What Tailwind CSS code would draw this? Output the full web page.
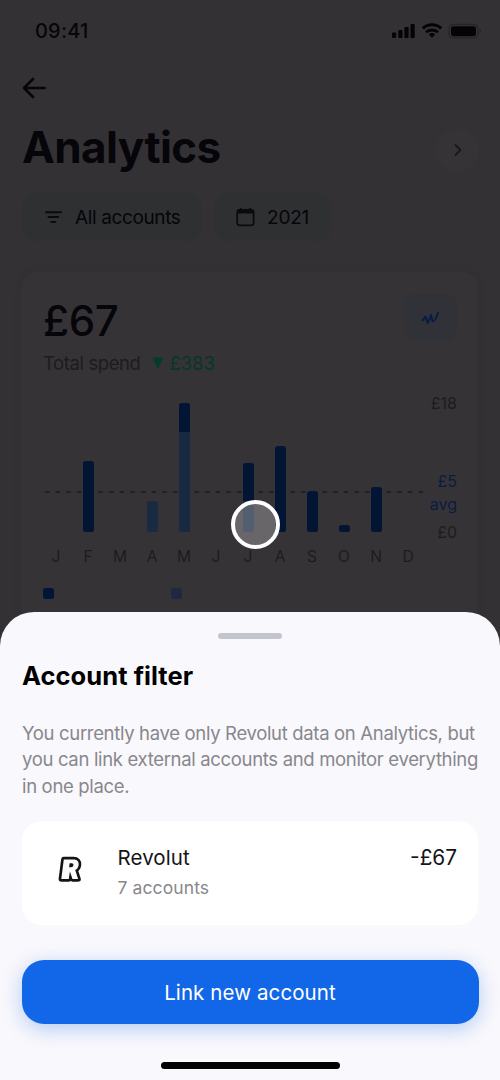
<!DOCTYPE html>
<html lang="en">
<head>
<meta charset="utf-8">
<title>Analytics</title>
<script src="https://cdn.jsdelivr.net/npm/@tailwindcss/browser@4"></script>
</head>
<body class="relative flex h-[1080px] w-[500px] flex-col overflow-hidden bg-[#343135] font-[Inter,sans-serif] text-[#060509]">

<!-- Status bar -->
<header class="flex h-[62px] shrink-0 items-center justify-between pr-[19px] pl-[35px]">
  <span class="text-[20px] leading-[24px] font-medium tracking-[0.2px]">09:41</span>
  <svg width="90" height="20" viewBox="0 0 90 20" fill="#040306">
    <rect x="1" y="11.5" width="4.2" height="5.5" rx="1"/>
    <rect x="7.3" y="9" width="4.2" height="8" rx="1"/>
    <rect x="13.4" y="6" width="4.2" height="11" rx="1"/>
    <rect x="19.5" y="3" width="4.2" height="14" rx="1"/>
    <path d="M31.8 7.4a13.5 13.5 0 0 1 18.4 0" fill="none" stroke="#040306" stroke-width="3"/>
    <path d="M35 11.3a9 9 0 0 1 12 0" fill="none" stroke="#040306" stroke-width="2.8"/>
    <path d="M37.8 13.4a4.8 4.8 0 0 1 6.4 0L41 16.8z"/>
    <rect x="58" y="3.4" width="29" height="13.6" rx="4" fill="none" stroke="#242226" stroke-width="1"/>
    <rect x="60" y="5.2" width="25" height="10" rx="2.4"/>
    <path d="M88.6 8v4.6c1.6-.6 1.6-4 0-4.6z" fill="#242226"/>
  </svg>
</header>

<div class="flex h-[52px] shrink-0 items-center px-[22px]">
  <svg width="25" height="22" viewBox="0 0 25 22" fill="none" stroke="#060509" stroke-width="2.7" stroke-linecap="round" stroke-linejoin="round"><path d="M22.6 11H2M11 2 2 11l9 9"/></svg>
</div>

<div class="flex h-[66px] shrink-0 items-center justify-between pr-[21px] pl-[22px]">
  <h1 class="text-[44px] leading-[52px] font-bold tracking-[-0.6px]">Analytics</h1>
  <div class="mt-[6px] flex size-[43px] items-center justify-center rounded-full bg-[#363337]">
    <svg width="10" height="14" viewBox="0 0 10 14" fill="none" stroke="#1a181c" stroke-width="1.8" stroke-linecap="round" stroke-linejoin="round"><path d="m2.500 2 5 5-5 5"/></svg>
  </div>
</div>

<div class="mt-[13px] flex h-[48px] shrink-0 gap-[12px] pl-[22px]">
  <div class="flex w-[180px] items-center rounded-[14px] bg-[#2f3032] pl-[23px]">
    <svg class="mr-[13px]" width="17" height="14" viewBox="0 0 17 14" fill="none" stroke="#0b0a0d" stroke-width="1.9" stroke-linecap="round"><path d="M1 2.200h15M3.500 7h9.700M6.300 12h4"/></svg>
    <span class="mt-px text-[19px] leading-[24px] tracking-[-0.37px] whitespace-nowrap">All accounts</span>
  </div>
  <div class="flex w-[118px] items-center rounded-[14px] bg-[#2f3032] pl-[22px]">
    <svg class="mr-[12px]" width="19" height="20" viewBox="0 0 19 20" fill="none" stroke="#0b0a0d"><rect x="1.2" y="2.8" width="16.4" height="15.6" rx="2.6" stroke-width="1.7"/><path d="M1.4 4.6h16" stroke-width="3.8"/><path d="M4.7 1v3M14.1 1v3" stroke-width="1.8"/></svg>
    <span class="mt-px text-[19px] leading-[24px] tracking-[-0.2px]">2021</span>
  </div>
</div>

<!-- Spend card -->
<section class="mx-[22px] mt-[31px] flex h-[370px] shrink-0 flex-col rounded-[16px] bg-[#363337] pr-[21px] pl-[22px] pt-[22px] shadow-[0_0_14px_rgba(0,0,0,0.03)]">
  <div class="flex h-[56px] items-start justify-between">
    <div class="mt-[2px] -ml-px text-[42px] leading-[50px] font-medium tracking-[-0.4px]">£67</div>
    <div class="flex h-[47px] w-[53px] items-center justify-center rounded-[12px] bg-[#313237]">
      <svg width="19" height="14" viewBox="0 0 19 14" fill="none" stroke="#071b45" stroke-width="2" stroke-linecap="round" stroke-linejoin="round"><path d="M1.500 9.300 4.500 5.500l2.300 6.500 3.200-8 1.700 6.500c1.900.5 3.700-4 5.300-8.500"/></svg>
    </div>
  </div>
  <div class="-ml-px flex h-[26px] items-center text-[18.5px] leading-[24px]">
    <span class="tracking-[-0.4px] text-[#1d1b1f]">Total spend</span>
    <svg class="mr-[6px] ml-[11px]" width="12" height="12" viewBox="0 0 12 12"><path d="M.3.5h11.400L6 11.800z" fill="#033c27"/></svg>
    <span class="tracking-[-0.1px] text-[#063725]">£383</span>
  </div>
  <div class="mt-[21px] flex h-[150px] justify-between">
    <div class="relative w-[380px]">
      <svg class="absolute top-[94px] left-0" width="380" height="2"><path d="M1 1h379" stroke="#1d1b1f" stroke-width="1.4" stroke-dasharray="4.6 6.07"/></svg>
      <div class="relative grid h-[135px] w-[384px] -translate-x-[4px] grid-cols-12 items-end justify-items-center">
        <i></i>
        <i class="h-[71px] w-[11px] rounded-t-[3px] rounded-b-[2px] bg-[#031535]"></i>
        <i></i>
        <i class="h-[31px] w-[11px] rounded-t-[3px] rounded-b-[2px] bg-[#1a2a42]"></i>
        <i class="flex h-[129px] w-[11px] flex-col overflow-hidden rounded-t-[3px] rounded-b-[2px] bg-[#192942]"><b class="h-[29px] bg-[#031535]"></b></i>
        <i></i>
        <i class="flex h-[69px] w-[11px] flex-col overflow-hidden rounded-t-[3px] rounded-b-[2px] bg-[#1a2a42]"><b class="h-[38px] bg-[#031535]"></b></i>
        <i class="h-[86px] w-[11px] rounded-t-[3px] rounded-b-[2px] bg-[#031535]"></i>
        <i class="h-[41px] w-[11px] rounded-t-[3px] rounded-b-[2px] bg-[#031535]"></i>
        <i class="h-[7px] w-[11px] rounded-t-[3px] rounded-b-[2px] bg-[#031535]"></i>
        <i class="h-[45px] w-[11px] rounded-t-[3px] rounded-b-[2px] bg-[#031535]"></i>
        <i></i>
      </div>
    </div>
    <div class="flex flex-col items-end text-[16px] leading-[23px] text-[#1d1b1f]">
      <span class="-mt-[5px]">£18</span>
      <span class="mt-[55px] text-[#0a1c42]">£5</span>
      <span class="text-[#0a1c42]">avg</span>
      <span class="mt-[5px]">£0</span>
    </div>
  </div>
  <div class="mt-[-2px] grid w-[384px] -translate-x-[4px] shrink-0 grid-cols-12 text-center text-[15.5px] leading-[24px] text-[#1d1b1f]">
    <span>J</span><span>F</span><span>M</span><span>A</span><span>M</span><span>J</span><span>J</span><span>A</span><span>S</span><span>O</span><span>N</span><span>D</span>
  </div>
  <div class="mt-[19px] -ml-px flex gap-[117px]">
    <i class="size-[11px] rounded-[2.5px] bg-[#031535]"></i>
    <i class="size-[11px] rounded-[2.5px] bg-[#1f2840]"></i>
  </div>
</section>

<!-- Touch indicator -->
<div class="absolute top-[500px] left-[231px] z-10 size-[49px] rounded-full border-[4.5px] border-white bg-white/25"></div>

<!-- Account filter sheet -->
<section class="absolute inset-x-0 bottom-0 z-20 flex h-[468px] flex-col rounded-t-[34px] bg-[#f9f8fc] px-[22px]">
  <div class="mt-[21px] h-[6px] w-[64px] shrink-0 self-center rounded-full bg-[#c2c5cd]"></div>
  <h2 class="mt-[21px] text-[25.5px] leading-[32px] font-bold tracking-[0.05px] text-black">Account filter</h2>
  <p class="mt-[28px] h-[79px] text-[18.5px] leading-[26.3px] tracking-[-0.33px] whitespace-nowrap text-[#88878c]">You currently have only Revolut data on Analytics, but<br>you can link external accounts and monitor everything<br>in one place.</p>
  <div class="mt-[22px] flex h-[104px] shrink-0 rounded-[20px] bg-white pr-[21px] pl-[35px]">
    <svg class="mt-[34px]" width="26" height="30" viewBox="0 0 26 30" fill="#fff" stroke-linejoin="round">
      <path d="M6.800 4.500h9.600c3.800 0 5.700 2.200 5.200 5.400-.4 2.500-1.500 4.200-3.400 5.200l2.900 8.900h-5.600l-2.600-7.600-1.100 7.600H4.300z" stroke="#151417" stroke-width="5.400"/>
      <path d="M6.800 4.500h9.600c3.800 0 5.700 2.200 5.200 5.400-.4 2.500-1.500 4.200-3.400 5.200l2.900 8.900h-5.600l-2.600-7.600-1.100 7.600H4.300z"/>
      <path d="m12.600 8.300-.5 3.900h1.900c1.400 0 2.200-.8 2.400-2s-.5-1.900-1.700-1.900z" fill="#151417"/>
    </svg>
    <div class="mt-[23px] ml-[34.5px] flex flex-col">
      <span class="text-[20.5px] leading-[28px] tracking-[0.1px] text-[#151417]">Revolut</span>
      <span class="mt-[3px] text-[17.5px] leading-[26px] tracking-[0.1px] text-[#88878c]">7 accounts</span>
    </div>
    <span class="mt-[23px] ml-auto text-[20.8px] leading-[28px] text-[#151417]">-£67</span>
  </div>
  <button class="mt-[35px] -mx-[0.5px] h-[64px] shrink-0 rounded-[22px] bg-[#1167e7] pt-px text-[20.5px] leading-[28px] tracking-[0.1px] text-white shadow-[0_5px_20px_rgba(17,103,231,0.3)]">Link new account</button>
  <div class="mt-[38px] h-[7px] w-[179px] shrink-0 self-center rounded-full bg-black"></div>
</section>
</body>
</html>
